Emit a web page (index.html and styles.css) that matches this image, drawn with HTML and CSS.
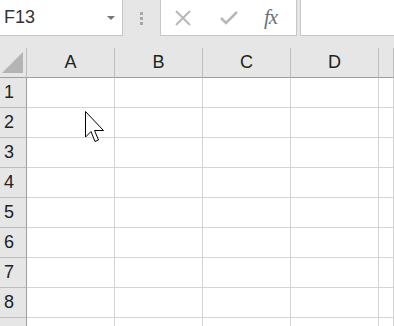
FILE: index.html
```html
<!DOCTYPE html>
<html lang="ja">
<head>
  <meta charset="UTF-8">
  <title>Sheet</title>
  <link rel="stylesheet" href="styles.css">
</head>
<body>

  <!-- 数式バー -->
  <div class="formula-bar">
    <div class="name-box">
      <span class="name-text">F13</span>
      <span class="drop"></span>
    </div>
    <div class="grip">
      <span></span><span></span><span></span>
    </div>
    <div class="fx-buttons">
      <svg class="icon" width="18" height="16" viewBox="0 0 18 16">
        <path d="M2 1 L16 15 M16 1 L2 15" stroke="#b8b8b8" stroke-width="2" fill="none"/>
      </svg>
      <svg class="icon" width="18" height="16" viewBox="0 0 18 16">
        <path d="M1 8 L6 13 L17 2" stroke="#b8b8b8" stroke-width="2.6" fill="none"/>
      </svg>
      <span class="fx">fx</span>
    </div>
    <div class="formula-input"></div>
  </div>

  <!-- シート -->
  <div class="sheet">
    <div class="corner"><span class="tri"></span></div>
    <div class="col-head">A</div>
    <div class="col-head">B</div>
    <div class="col-head">C</div>
    <div class="col-head">D</div>
    <div class="col-head"></div>
  </div>
  <div class="sheet" id="rows"></div>

  <svg class="pointer" width="22" height="34" viewBox="0 0 22 34">
    <path d="M0.5 0.5 L0.5 26 L6 20.5 L10 30.5 L13.5 29 L9.5 19.5 L18.5 19.5 Z" fill="#fff" stroke="#000" stroke-width="1"/>
  </svg>

  <script>
    // 9行目は下端で切れるので番号は出さない
    const rows = document.getElementById("rows");
    for (let r = 1; r <= 9; r++) {
      const head = document.createElement("div");
      head.className = "row-head";
      if (r < 9) head.textContent = r;
      rows.appendChild(head);
      for (let c = 0; c < 5; c++) {
        const cell = document.createElement("div");
        cell.className = "cell";
        rows.appendChild(cell);
      }
    }
  </script>
</body>
</html>
```

FILE: styles.css
```css
html, body {
  overflow: hidden;
}
body {
  margin: 0;
  padding: 0;
  width: 394px;
  height: 326px;
  background-color: #e6e6e6;
  font-family: 'Liberation Sans', Arial, sans-serif;
  color: #222;
  position: relative;
}
.formula-bar {
  display: flex;
  height: 48px;
  align-items: flex-start;
}
.name-box {
  box-sizing: border-box;
  width: 123px;
  height: 36px;
  background-color: #fff;
  border-right: 1px solid #c6c6c6;
  border-bottom: 1px solid #c6c6c6;
  display: flex;
  align-items: center;
  justify-content: space-between;
  padding: 0 7px 0 4px;
}
.name-text {
  font-size: 18px;
  color: #333;
}
.drop {
  width: 0;
  height: 0;
  border-left: 4px solid transparent;
  border-right: 4px solid transparent;
  border-top: 4px solid #777;
}
.grip {
  width: 37px;
  height: 36px;
  display: flex;
  flex-direction: column;
  align-items: center;
  justify-content: center;
  gap: 2px;
}
.grip span {
  width: 3px;
  height: 3px;
  background-color: #a8a8a8;
}
.fx-buttons {
  box-sizing: border-box;
  width: 137px;
  height: 36px;
  background-color: #fff;
  border: 1px solid #c6c6c6;
  border-top: none;
  display: flex;
  align-items: center;
  padding-left: 13px;
}
.icon { display: block; }
.fx-buttons .icon + .icon { margin-left: 28px; }
.fx {
  margin-left: 26px;
  font-family: 'Liberation Serif', 'Times New Roman', serif;
  font-style: italic;
  font-size: 21px;
  color: #707070;
  letter-spacing: -1px;
}
.formula-input {
  box-sizing: border-box;
  flex: 1;
  margin-left: 3px;
  height: 36px;
  background-color: #fff;
  border-left: 1px solid #c6c6c6;
  border-bottom: 1px solid #c6c6c6;
}
.sheet {
  display: grid;
  grid-template-columns: 27px repeat(4, 88px) 1fr;
  grid-auto-rows: 30px;
}
.corner, .col-head, .row-head, .cell {
  box-sizing: border-box;
}
.corner {
  border-right: 1px solid #bdbdbd;
  border-bottom: 1px solid #9e9e9e;
  position: relative;
}
.tri {
  position: absolute;
  left: 2px;
  top: 4px;
  width: 0;
  height: 0;
  border-left: 21px solid transparent;
  border-bottom: 21px solid #b4b4b4;
}
.col-head {
  border-right: 1px solid #bdbdbd;
  border-bottom: 1px solid #9e9e9e;
  display: flex;
  align-items: center;
  justify-content: center;
  font-size: 18px;
  color: #222;
}
.row-head {
  border-right: 1px solid #9e9e9e;
  border-bottom: 1px solid #bdbdbd;
  display: flex;
  align-items: center;
  padding-left: 4px;
  font-size: 18px;
  color: #222;
}
.cell {
  background-color: #fff;
  border-right: 1px solid #d4d4d4;
  border-bottom: 1px solid #d4d4d4;
}
.pointer {
  position: absolute;
  left: 85px;
  top: 111px;
}
```
